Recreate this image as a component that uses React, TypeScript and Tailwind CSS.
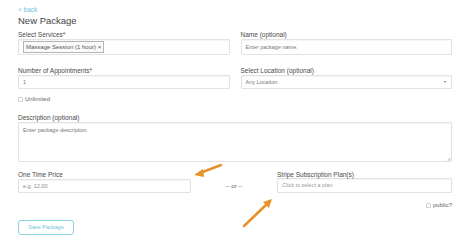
import React from "react";

const label = "block text-[6.5px] leading-[9px] h-[9px] text-[#4a4a4a]";
const input =
  "w-full border border-[#e2e2e2] bg-white text-[5.5px] text-[#777] px-[4px] flex items-center rounded-[1px] shadow-[inset_0_1px_1px_rgba(0,0,0,0.04)]";

function Check({ text }: { text: string }) {
  return (
    <div className="flex items-center gap-[2px] h-[9px] text-[6px] text-[#666]">
      <span className="w-[5px] h-[5px] border border-[#d0d0d0] rounded-[1px] bg-white" />
      <span>{text}</span>
    </div>
  );
}

export default function App() {
  return (
    <div
      className="relative w-[474px] h-[246px] bg-white pl-[18px] pt-[6px] overflow-hidden"
      style={{ fontFamily: '"Liberation Sans", Arial, sans-serif' }}
    >
      <div className="text-[6.5px] leading-[8px] h-[8px] text-[#6ec6d6]">&lt; back</div>
      <div className="mt-[1px] text-[9.5px] leading-[12px] text-[#444]">New Package</div>

      <div className="w-[434px] mt-[3px] grid grid-cols-2 gap-x-[11px]">
        <div>
          <span className={label}>Select Services*</span>
          <div className={`${input} h-[16px] px-[2px]`}>
            <span className="border border-[#b5b5b5] bg-[#fafafa] h-[12px] px-[2px] flex items-center text-[6px] text-[#555]">
              Massage Session (1 hour) ×
            </span>
          </div>
        </div>
        <div>
          <span className={label}>Name (optional)</span>
          <div className={`${input} h-[16px]`}>Enter package name.</div>
        </div>

        <div className="mt-[11px]">
          <span className={label}>Number of Appointments*</span>
          <div className={`${input} h-[14px] text-[#555]`}>1</div>
        </div>
        <div className="mt-[11px]">
          <span className={label}>Select Location (optional)</span>
          <div className={`${input} h-[14px] justify-between text-[#555]`}>
            <span>Any Location</span>
            <span className="text-[4px] text-[#777] pr-[1px]">▾</span>
          </div>
        </div>
      </div>

      <div className="mt-[6px]">
        <Check text="Unlimited" />
      </div>

      <div className="w-[434px] mt-[9px]">
        <span className={label}>Description (optional)</span>
        <div className={`${input} h-[40px] items-start pt-[3px] relative`}>
          Enter package description.
          <span className="absolute right-[1px] bottom-[0px] text-[4px] text-[#c8c8c8] leading-[4px]">◢</span>
        </div>
      </div>

      <div className="w-[434px] mt-[8px] grid grid-cols-[173px_1fr_175px]">
        <div>
          <span className={label}>One Time Price</span>
          <div className={`${input} h-[14px] text-[#888]`}>e.g. 12.00</div>
        </div>
        <div className="flex items-center justify-center pt-[9px] text-[6px] text-[#555]">-- or --</div>
        <div>
          <span className={label}>Stripe Subscription Plan(s)</span>
          <div className={`${input} h-[15px] mt-[-1px] text-[#999]`}>Click to select a plan</div>
        </div>
      </div>

      <div className="w-[434px] mt-[8px] flex justify-end">
        <Check text="public?" />
      </div>

      <button className="mt-[10px] w-[56px] h-[15px] border border-[#8ad3e1] rounded-[3px] text-[5.5px] text-[#6ec6d6] bg-white">
        Save Package
      </button>

      <svg className="absolute left-0 top-0 pointer-events-none" width="474" height="246">
        <g stroke="#e8922a" strokeWidth="2.6" strokeLinecap="round">
          <line x1="221" y1="165" x2="200" y2="173" />
          <line x1="244" y1="226" x2="267" y2="204" />
        </g>
        <g fill="#e8922a">
          <polygon points="194,175 203,169 204,177" />
          <polygon points="272,199 263,202 269,208" />
        </g>
      </svg>
    </div>
  );
}
